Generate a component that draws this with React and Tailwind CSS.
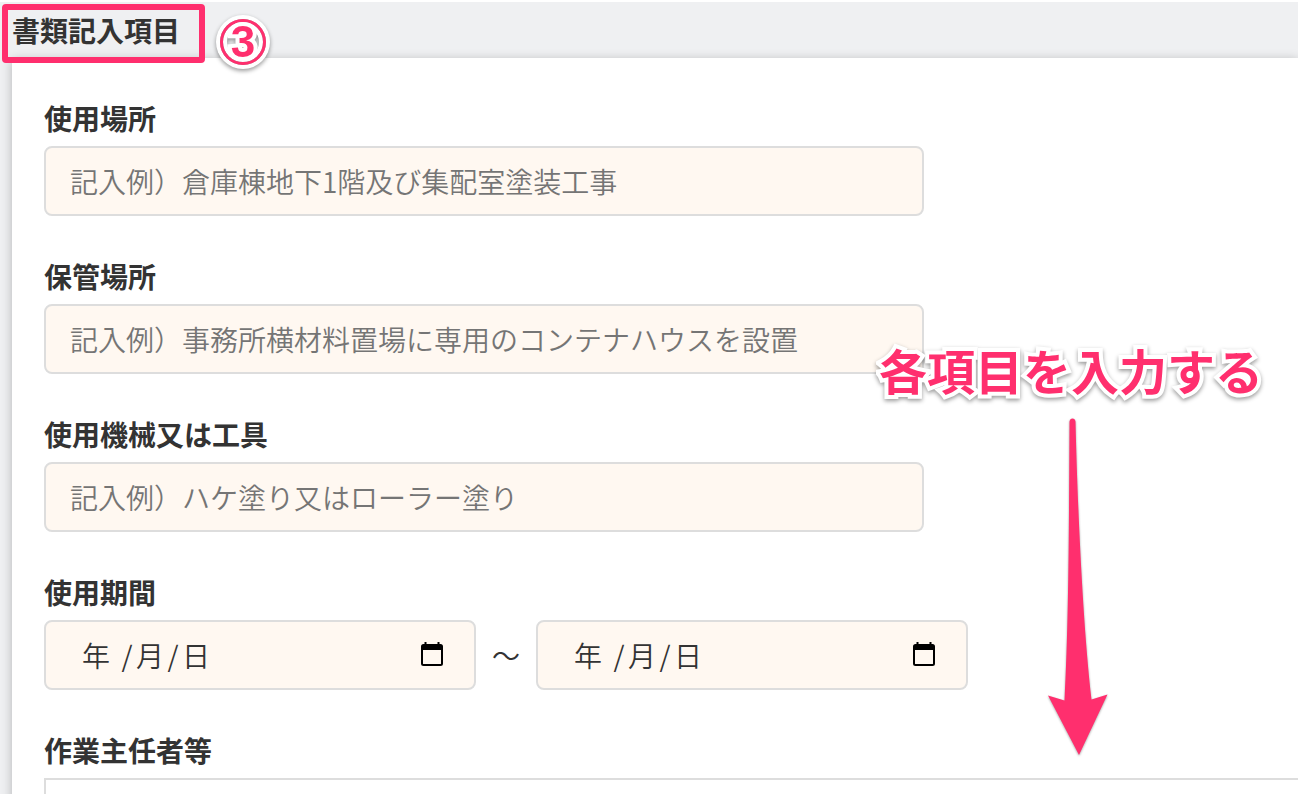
import React, { useState } from 'react';

const textFields = [
    { name: 'usagePlace', label: '使用場所', placeholder: '記入例）倉庫棟地下1階及び集配室塗装工事' },
    { name: 'storagePlace', label: '保管場所', placeholder: '記入例）事務所横材料置場に専用のコンテナハウスを設置' },
    { name: 'tools', label: '使用機械又は工具', placeholder: '記入例）ハケ塗り又はローラー塗り' },
];

function CalendarIcon() {
    return (
        <svg viewBox="0 0 24 26" className="w-6 h-[26px]" fill="none">
            <path d="M5.500 0v4M18.500 0v4" stroke="#000" strokeWidth="2" />
            <rect x="2" y="3" width="20" height="20" rx="1.500" stroke="#000" strokeWidth="2" />
            <path d="M2 3h20v5H2z" fill="#000" />
        </svg>
    );
}

function TextField({ name, label, placeholder, value, onChange }) {
    return (
        <div className="flex flex-col gap-2">
            <label htmlFor={name} className="text-[28px] leading-10 font-bold">
                {label}
            </label>
            <input
                id={name}
                type="text"
                name={name}
                value={value}
                onChange={onChange}
                placeholder={placeholder}
                className="w-full max-w-[880px] h-[70px] bg-[#fff8f1] border-2 border-[#dddddd] rounded-lg px-6 text-[28px] font-[350] outline-none focus:border-gray-400 placeholder:text-[#757575]"
            />
        </div>
    );
}

function DatePart({ name, label, placeholder, value, onChange }) {
    return (
        <input
            id={name}
            type="text"
            inputMode="numeric"
            name={name}
            aria-label={label}
            value={value}
            onChange={onChange}
            placeholder={placeholder}
            className="w-7 outline-none placeholder:text-[#333333]"
        />
    );
}

function DateField({ name, label, formData, onChange }) {
    return (
        <div className="w-[432px] h-[70px] flex items-center justify-between bg-[#fff8f1] border-2 border-[#dddddd] rounded-lg pl-9 pr-[30px]">
            <div className="flex items-center text-[28px] font-[350]">
                <DatePart name={`${name}Year`} label={`${label} 年`} placeholder="年" value={formData[`${name}Year`]} onChange={onChange} />
                <span className="w-[18px] ml-2 text-center">/</span>
                <DatePart name={`${name}Month`} label={`${label} 月`} placeholder="月" value={formData[`${name}Month`]} onChange={onChange} />
                <span className="w-[18px] text-center">/</span>
                <DatePart name={`${name}Day`} label={`${label} 日`} placeholder="日" value={formData[`${name}Day`]} onChange={onChange} />
            </div>
            <button type="button" aria-label="カレンダーを開く" className="shrink-0">
                <CalendarIcon />
            </button>
        </div>
    );
}

export default function App() {
    const [formData, setFormData] = useState({
        usagePlace: '',
        storagePlace: '',
        tools: '',
        startYear: '',
        startMonth: '',
        startDay: '',
        endYear: '',
        endMonth: '',
        endDay: ''
    });

    const handleChange = (e) => {
        const { name, value } = e.target;
        setFormData(prev => ({
            ...prev,
            [name]: value
        }));
    };

    return (
        <div className="relative h-screen overflow-hidden flex flex-col bg-[#eff0f2] border-t-2 border-white text-[#333333] font-['Noto_Sans_CJK_JP',sans-serif]">

            {/* Section heading */}
            <h2 className="px-3 pt-2 pb-2 text-[28px] leading-10 font-bold">書類記入項目</h2>

            {/* Form card */}
            <form className="flex-1 ml-3 pl-8 pt-10 flex flex-col gap-10 bg-white shadow-[0_2px_10px_rgba(0,0,0,0.25)]">
                {textFields.map((field) => (
                    <TextField
                        key={field.name}
                        {...field}
                        value={formData[field.name]}
                        onChange={handleChange}
                    />
                ))}

                {/* Period */}
                <div className="flex flex-col gap-2">
                    <label htmlFor="startYear" className="text-[28px] leading-10 font-bold">使用期間</label>
                    <div className="flex items-center gap-4">
                        <DateField name="start" label="開始日" formData={formData} onChange={handleChange} />
                        <span className="text-[28px] font-[350]">～</span>
                        <DateField name="end" label="終了日" formData={formData} onChange={handleChange} />
                    </div>
                </div>

                {/* Supervisors */}
                <div className="flex flex-col gap-2">
                    <h3 className="text-[28px] leading-10 font-bold">作業主任者等</h3>
                    <div className="h-40 border-t-2 border-l-2 border-[#dddddd]"></div>
                </div>
            </form>

            {/* Callouts */}
            <div className="absolute left-[2px] top-[2px] w-[203px] h-[59px] border-[6px] border-[#ff2f6e] rounded-sm pointer-events-none"></div>
            <div className="absolute left-[220px] top-[17px] w-[46px] h-[46px] flex items-center justify-center rounded-full border-3 border-[#ff2f6e] shadow-[0_0_0_4px_white,inset_0_0_0_4px_white] drop-shadow-[0_2px_2px_rgba(0,0,0,0.4)]">
                <span className="font-['Liberation_Sans',sans-serif] text-[44px] leading-[44px] font-bold text-[#ff2f6e] [-webkit-text-stroke:8px_white] [paint-order:stroke_fill]">3</span>
            </div>
            <p className="absolute left-[879px] top-[339px] text-[48px] leading-[56px] font-bold whitespace-nowrap text-[#ff2f6e] [-webkit-text-stroke:8px_white] [paint-order:stroke_fill] [stroke-linejoin:round] drop-shadow-[0_2px_2px_rgba(0,0,0,0.4)]">
                各項目を入力する
            </p>
            <svg viewBox="0 0 64 340" className="absolute left-[1046px] top-[415px] w-16 h-[340px] drop-shadow-[0_1px_1px_rgba(0,0,0,0.35)]">
                <path
                    d="M23.5 4.5Q24 1.5 26.500 1.500Q29 1.500 29.500 4.500C31 70 36 200 45.500 282.500L61.500 277.500L33 338L2 278.500L18.500 283.500C23 200 23 90 23.500 4.500Z"
                    fill="#ff2f6e"
                />
            </svg>
        </div>
    );
}
